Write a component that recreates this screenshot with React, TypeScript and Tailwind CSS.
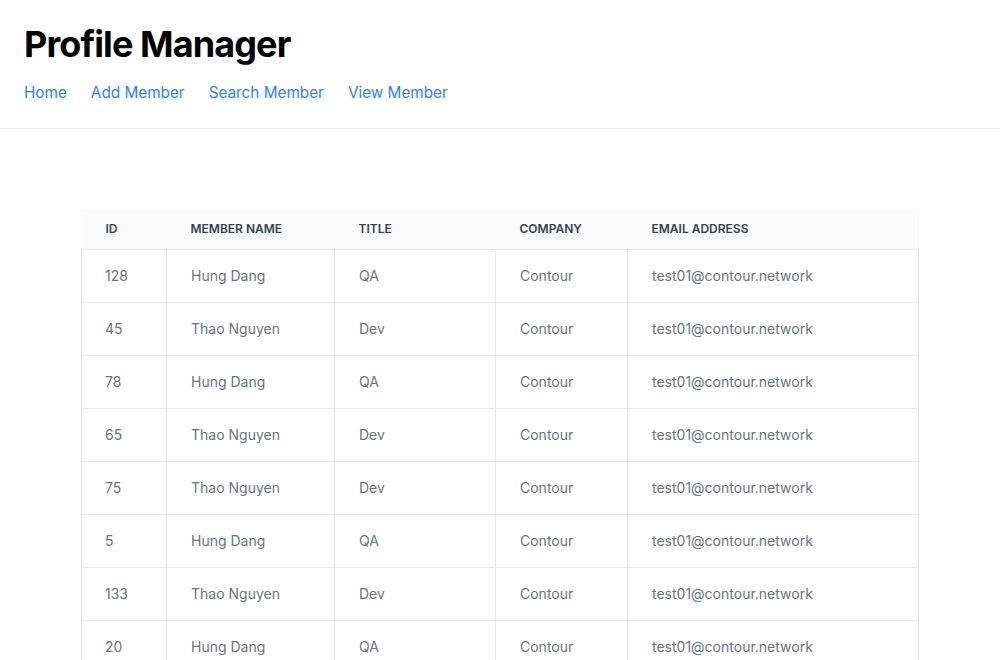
const members = [
  { id: 128, name: "Hung Dang", title: "QA" },
  { id: 45, name: "Thao Nguyen", title: "Dev" },
  { id: 78, name: "Hung Dang", title: "QA" },
  { id: 65, name: "Thao Nguyen", title: "Dev" },
  { id: 75, name: "Thao Nguyen", title: "Dev" },
  { id: 5, name: "Hung Dang", title: "QA" },
  { id: 133, name: "Thao Nguyen", title: "Dev" },
  { id: 20, name: "Hung Dang", title: "QA" },
];

const links = ["Home", "Add Member", "Search Member", "View Member"];

export default function App() {
  return (
    <div className="min-h-screen bg-white font-['Inter',sans-serif]">
      <header className="border-b border-gray-200 px-6 pt-6 pb-[23px]">
        <h1 className="text-4xl font-bold tracking-tight text-black">Profile Manager</h1>
        <nav className="mt-[17px] flex gap-6">
          {links.map((l) => (
            <a key={l} href="#" className="text-[15.3px] leading-6 text-blue-500">
              {l}
            </a>
          ))}
        </nav>
      </header>

      <main className="pt-20">
        <table className="mx-auto w-[838px] table-fixed border-collapse text-left">
          <colgroup>
            <col className="w-[85px]" />
            <col className="w-[168px]" />
            <col className="w-[161px]" />
            <col className="w-[132px]" />
            <col />
          </colgroup>
          <thead className="bg-gray-50">
            <tr className="border-b border-gray-200">
              <th className="px-6 py-3 text-xs font-semibold uppercase text-gray-700">ID</th>
              <th className="px-6 py-3 text-xs font-semibold uppercase text-gray-700">Member Name</th>
              <th className="px-6 py-3 text-xs font-semibold uppercase text-gray-700">Title</th>
              <th className="px-6 py-3 text-xs font-semibold uppercase text-gray-700">Company</th>
              <th className="px-6 py-3 text-xs font-semibold uppercase text-gray-700">Email Address</th>
            </tr>
          </thead>
          <tbody>
            {members.map((m, i) => (
              <tr key={i} className="border-b border-gray-200">
                <td className="border-x border-gray-200 py-4 pl-[23px] pr-6 text-sm text-gray-500">{m.id}</td>
                <td className="border-x border-gray-200 px-6 py-4 text-sm text-gray-500">{m.name}</td>
                <td className="border-x border-gray-200 px-6 py-4 text-sm text-gray-500">{m.title}</td>
                <td className="border-x border-gray-200 px-6 py-4 text-sm text-gray-500">Contour</td>
                <td className="border-x border-gray-200 px-6 py-4 text-sm text-gray-500">test01@contour.network</td>
              </tr>
            ))}
          </tbody>
        </table>
      </main>
    </div>
  );
}
